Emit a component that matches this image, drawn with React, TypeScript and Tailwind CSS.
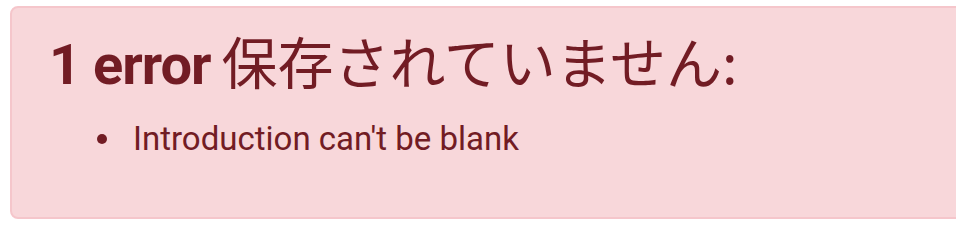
// error summary box shown when a form fails to save
export default function App() {
  return (
    <div className="h-[236px] w-[956px] overflow-hidden bg-white pt-[6px] pl-[10px]">
      <div
        className="w-[1000px] rounded-[8px] border-2 border-[#f5c6cb] bg-[#f8d7da] px-[40px] pt-[18px] pb-[22px] text-[#721c24]"
        style={{ fontFamily: 'Roboto, "Noto Sans CJK JP", sans-serif' }}
      >
        <h2 className="-ml-[3px] mb-[16px] text-[56px] font-normal leading-[67px]">
          <span className="mr-[-3px] font-bold tracking-[-1px]">1 error</span>{" "}
          <span style={{ fontFamily: '"Noto Sans CJK JP", sans-serif' }}>保存されていません:</span>
        </h2>
        <ul className="mb-[32px] pl-[45px] text-[33px] leading-[48px]">
          <li className="flex items-center gap-[26px]">
            <span className="h-[10px] w-[10px] shrink-0 rounded-full bg-[#721c24]" />
            <span>Introduction can't be blank</span>
          </li>
        </ul>
      </div>
    </div>
  );
}
